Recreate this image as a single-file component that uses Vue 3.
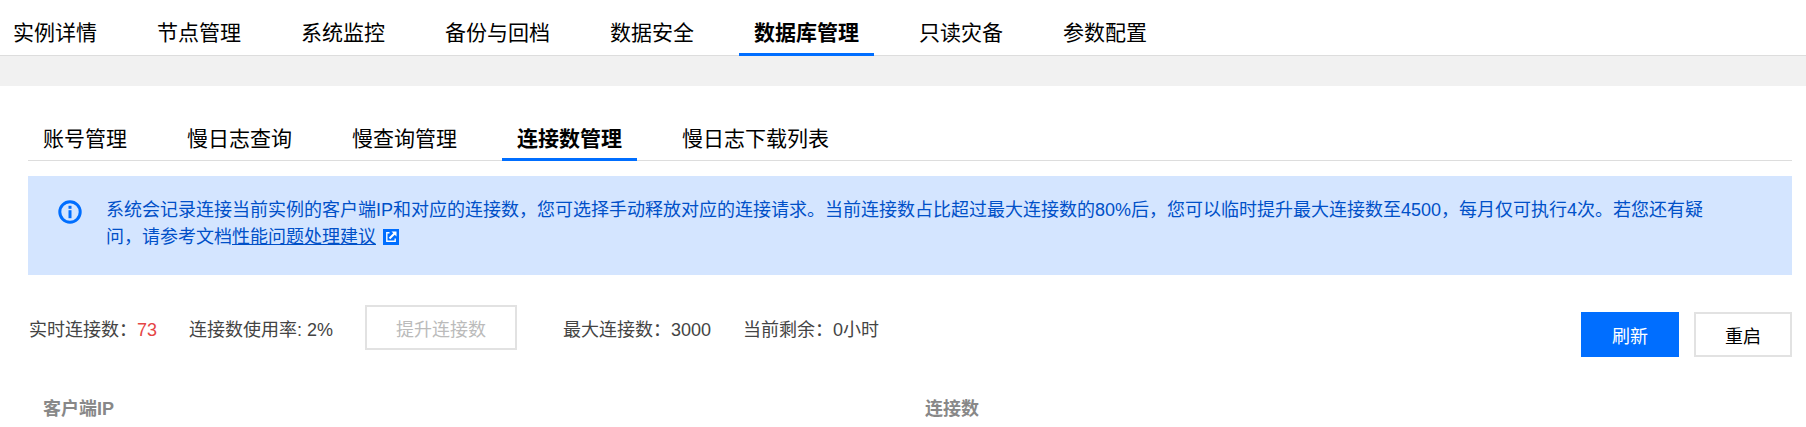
<template>
  <div class="page">
    <div class="main-tabs">
      <a
        v-for="tab in mainTabs"
        :key="tab"
        class="tab"
        :class="{ active: tab === '数据库管理' }"
      >{{ tab }}</a>
    </div>
    <div class="band"></div>
    <div class="content">
      <div class="sub-tabs">
        <a
          v-for="tab in subTabs"
          :key="tab"
          class="tab"
          :class="{ active: tab === '连接数管理' }"
        >{{ tab }}</a>
      </div>

      <div class="alert">
        <svg class="alert-icon" viewBox="0 0 24 24" aria-hidden="true">
          <circle cx="12" cy="12" r="10.2" fill="none" stroke="#006eff" stroke-width="3" />
          <rect x="10.5" y="5.8" width="3" height="3" fill="#006eff" />
          <rect x="10.5" y="10.2" width="3" height="8" fill="#006eff" />
        </svg>
        <p class="alert-text">
          <span>系统会记录连接当前实例的客户端IP和对应的连接数，您可选择手动释放对应的连接请求。当前连接数占比超过最大连接数的80%后，您可以临时提升最大连接数至4500，每月仅可执行4次。若您还有疑问，请参考文档</span><a class="doc-link">性能问题处理建议</a><svg class="link-icon" viewBox="0 0 16 16" aria-hidden="true">
            <rect width="16" height="16" fill="#006eff" />
            <path d="M6.5 3.8H3.8v8.4h8.4V9.5" fill="none" stroke="#fff" stroke-width="1.4" />
            <path d="M6.5 9.5L11.5 4.5" fill="none" stroke="#fff" stroke-width="2.2" />
            <path d="M8.5 2.5h5v5z" fill="#fff" />
          </svg>
        </p>
      </div>

      <div class="toolbar">
        <div class="stats">
          <span class="stat">实时连接数：<em class="danger">73</em></span>
          <span class="stat">连接数使用率: 2%</span>
          <button class="btn btn-disabled" disabled>提升连接数</button>
          <span class="stat">最大连接数：3000</span>
          <span class="stat">当前剩余：0小时</span>
        </div>
        <div class="actions">
          <button class="btn btn-primary">刷新</button>
          <button class="btn btn-default">重启</button>
        </div>
      </div>

      <div class="table-head">
        <div class="col-ip">客户端IP</div>
        <div>连接数</div>
      </div>
    </div>
  </div>
</template>

<script setup>
const mainTabs = ["实例详情", "节点管理", "系统监控", "备份与回档", "数据安全", "数据库管理", "只读灾备", "参数配置"];
const subTabs = ["账号管理", "慢日志查询", "慢查询管理", "连接数管理", "慢日志下载列表"];
</script>

<style>
html,
body {
  margin: 0;
  background: #fff;
  overflow: hidden;
}
</style>

<style scoped>
.page {
  width: 1806px;
  height: 427px;
  overflow: hidden;
  font-family: "Liberation Sans", "Noto Sans CJK SC", sans-serif;
  color: #000;
}
.main-tabs,
.sub-tabs {
  display: flex;
}
.main-tabs {
  height: 55px;
  border-bottom: 1px solid #ddd;
}
.sub-tabs {
  height: 44px;
  margin-top: 30px;
  border-bottom: 1px solid #ddd;
}
.tab {
  position: relative;
  padding: 0 15px;
  margin-right: 30px;
  font-size: 21px;
  white-space: nowrap;
  color: #000;
}
.main-tabs .tab {
  line-height: 66px;
}
.main-tabs .tab:first-child {
  padding-left: 13px;
}
.sub-tabs .tab {
  line-height: 45px;
}
.tab.active {
  font-weight: 700;
}
.tab.active::after {
  content: "";
  position: absolute;
  left: 0;
  right: 0;
  bottom: -1px;
  height: 3px;
  background: #006eff;
}
.band {
  height: 30px;
  background: #f1f1f1;
}
.content {
  padding: 0 14px 0 28px;
}
.alert {
  display: flex;
  margin-top: 15px;
  height: 99px;
  box-sizing: border-box;
  padding: 21px 30px 0;
  background: #d4e5ff;
}
.alert-icon {
  flex: none;
  width: 24px;
  height: 24px;
  margin: 3px 24px 0 0;
}
.alert-text {
  margin: 0;
  width: 1618px;
  font-size: 18px;
  line-height: 27px;
  color: #0050c8;
}
.doc-link {
  color: #0050c8;
  text-decoration: underline;
}
.link-icon {
  width: 16px;
  height: 16px;
  margin-left: 7px;
  vertical-align: -2px;
}
.toolbar {
  display: flex;
  justify-content: space-between;
  align-items: flex-start;
  margin-top: 30px;
}
.stats {
  display: flex;
  align-items: center;
  height: 45px;
  font-size: 18px;
  color: #444;
  padding-left: 1px;
}
.stat {
  margin-right: 32px;
  white-space: nowrap;
}
.danger {
  font-style: normal;
  color: #e54545;
}
.btn {
  box-sizing: border-box;
  height: 45px;
  padding: 0;
  font: inherit;
  font-size: 18px;
  border: 2px solid #e2e2e2;
  background: #fff;
}
.btn-disabled {
  width: 152px;
  margin-right: 46px;
  color: #bbb;
}
.actions {
  display: flex;
  gap: 15px;
  margin-top: 7px;
}
.btn-primary,
.btn-default {
  width: 98px;
}
.btn-primary {
  border: 0;
  background: #006eff;
  color: #fff;
}
.btn-default {
  color: #000;
}
.table-head {
  display: flex;
  margin-top: 39px;
  padding-left: 15px;
  font-size: 18px;
  font-weight: 700;
  line-height: 27px;
  color: #888;
}
.col-ip {
  width: 882px;
}
</style>
